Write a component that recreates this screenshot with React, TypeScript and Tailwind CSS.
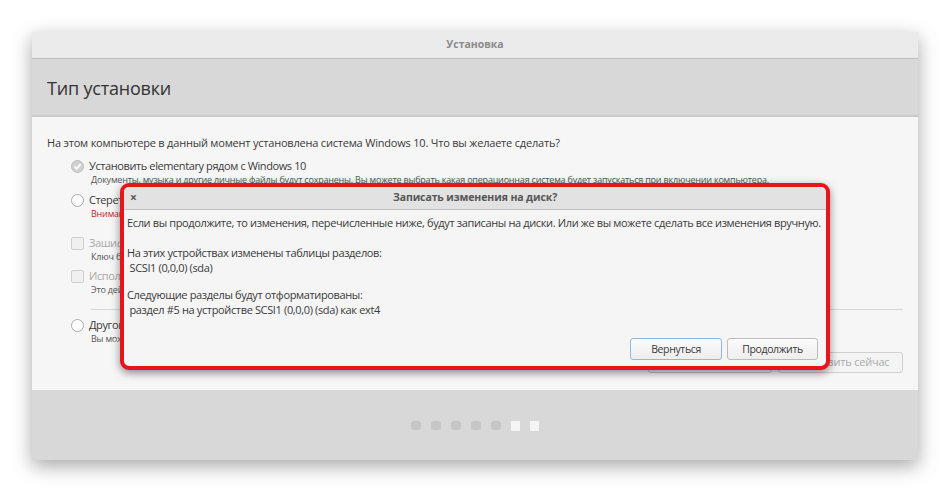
import { JSX } from 'react';

const font = { fontFamily: '"Open Sans", "Noto Sans", sans-serif' };

const CheckedIcon = () => (
    <svg width="13" height="13" viewBox="0 0 13 13" className="shrink-0">
        <circle cx="6.5" cy="6.5" r="6" fill="#d0d0d0" stroke="#bdbdbd" />
        <path d="M3.6 6.7 L5.7 8.8 L9.6 4.4" fill="none" stroke="#ffffff" strokeWidth="1.8" />
    </svg>
);

const RadioIcon = () => (
    <svg width="13" height="13" viewBox="0 0 13 13" className="shrink-0">
        <circle cx="6.5" cy="6.5" r="6" fill="#fdfdfd" stroke="#a9a9a9" />
    </svg>
);

const BoxIcon = () => (
    <span className="block w-[13px] h-[13px] shrink-0 rounded-[2px] border border-[#cfcfcf] bg-[#f0f0f0]" />
);

interface OptionProps {
    icon: JSX.Element;
    label: string;
    desc?: string;
    disabled?: boolean;
    warn?: string;
    className?: string;
}

const Option = ({ icon, label, desc, disabled, warn, className }: OptionProps): JSX.Element => (
    <div className={className}>
        <div className="flex items-center gap-[5px] h-[16px]">
            {icon}
            <span className={`text-[11px] tracking-[-0.4px] whitespace-nowrap ${disabled ? 'text-[#a8a8a8]' : 'text-[#3a3a3a]'}`}>{label}</span>
        </div>
        {desc && <div className="pl-[20px] text-[9px] tracking-[-0.2px] leading-[12px] text-[#555] whitespace-nowrap">{desc}</div>}
        {warn && <div className="pl-[20px] text-[9px] tracking-[-0.2px] leading-[12px] text-[#c6262e] whitespace-nowrap">{warn}</div>}
    </div>
);

const App = (): JSX.Element => {
    return (
        <div className="w-[950px] h-[493px] bg-white pt-[32px] pl-[32px] overflow-hidden" style={font}>
            <div className="relative w-[886px] h-[428px] flex flex-col shadow-[0_6px_18px_rgba(0,0,0,0.35)]">
                {/* title bar */}
                <div className="h-[27px] shrink-0 bg-[#ebebeb] border-b border-[#bdbdbd] flex items-center justify-center">
                    <span className="text-[10.5px] font-bold text-[#8a8a8a]">Установка</span>
                </div>
                {/* page header */}
                <div className="h-[58px] shrink-0 bg-[#d8d8d8] border-b-2 border-[#c9c9c9] flex items-center pl-[15px] pt-[3px]">
                    <span className="text-[18px] tracking-[-0.2px] text-[#333]">Тип установки</span>
                </div>
                {/* body */}
                <div className="flex-1 bg-[#f6f6f6] pl-[15px] pt-[17px] relative">
                    <p className="text-[11px] tracking-[-0.2px] leading-[17px] text-[#3a3a3a] whitespace-nowrap">
                        На этом компьютере в данный момент установлена система Windows 10. Что вы желаете сделать?
                    </p>
                    <div className="pl-[24px] mt-[7px]">
                        <Option
                            icon={<CheckedIcon />}
                            label="Установить elementary рядом с Windows 10"
                            desc="Документы, музыка и другие личные файлы будут сохранены. Вы можете выбрать какая операционная система будет запускаться при включении компьютера."
                        />
                        <Option
                            className="mt-[6px]"
                            icon={<RadioIcon />}
                            label="Стереть диск и установить elementary"
                            warn="Внимание: Это удалит все ваши программы, документы, фотографии, музыку и другие файлы во всех операционных системах."
                        />
                        <Option
                            className="mt-[15px]"
                            icon={<BoxIcon />}
                            disabled
                            label="Зашифровать новую установку elementary для безопасности"
                            desc="Ключ безопасности можно выбрать на следующем шаге."
                        />
                        <Option
                            className="mt-[5px]"
                            icon={<BoxIcon />}
                            disabled
                            label="Использовать LVM при новой установке elementary"
                            desc="Это действие установит систему управления логическими томами (LVM). Это позволит делать снимки и легче изменять разделы."
                        />
                        <div className="ml-[20px] mt-[13px] mr-[15px] border-t border-[#d5d5d5]" />
                        <Option
                            className="mt-[7px]"
                            icon={<RadioIcon />}
                            label="Другой вариант"
                            desc="Вы можете самостоятельно создать или изменить разделы, или выбрать несколько разделов для elementary."
                        />
                    </div>
                    <div className="flex justify-end gap-[6px] pr-[15px] mt-[7px]">
                        <button className="w-[124px] h-[21px] rounded-[3px] border border-[#c4c4c4] bg-[#f4f4f4] text-[11px] text-[#aaa]">Назад</button>
                        <button className="w-[125px] h-[21px] rounded-[3px] border border-[#d0d0d0] bg-[#f4f4f4] text-[11px] tracking-[-0.2px] text-[#aaa]">Установить сейчас</button>
                    </div>
                </div>
                {/* footer */}
                <div className="h-[70px] shrink-0 bg-[#d8d8d8] flex items-center justify-center gap-[10px] pt-[1px]">
                    {[0, 1, 2, 3, 4].map((i) => (
                        <span key={i} className="block w-[10px] h-[9px] rounded-[3px] bg-[#c6c6c6]" />
                    ))}
                    <span className="block w-[9px] h-[10px] bg-[#f4f4f4]" />
                    <span className="block w-[9px] h-[10px] bg-[#f4f4f4]" />
                </div>

                {/* confirmation dialog, outlined in red */}
                <div className="absolute left-[88px] top-[151px] w-[710px] h-[187px] rounded-[9px] border-[4px] border-[#e8141b] bg-[#f5f5f5] shadow-[0_3px_8px_rgba(0,0,0,0.45)] overflow-hidden flex flex-col">
                    <div className="h-[23px] shrink-0 bg-[#e2e2e2] border-b border-[#c2c2c2] relative flex items-center justify-center">
                        <span className="absolute left-[6px] top-[2px] text-[12px] font-bold text-[#555]">×</span>
                        <span className="text-[10.5px] tracking-[-0.1px] font-bold text-[#555]">Записать изменения на диск?</span>
                    </div>
                    <div className="flex-1 pl-[3px] pt-[6px] text-[11px] tracking-[-0.36px] leading-[14px] text-[#3a3a3a] flex flex-col">
                        <p className="whitespace-nowrap">
                            Если вы продолжите, то изменения, перечисленные ниже, будут записаны на диски. Или же вы можете сделать все изменения вручную.
                        </p>
                        <p className="mt-[15px] leading-[15px] whitespace-pre">{'На этих устройствах изменены таблицы разделов:\n SCSI1 (0,0,0) (sda)'}</p>
                        <p className="mt-[12px] leading-[15px] whitespace-pre">{'Следующие разделы будут отформатированы:\n раздел #5 на устройстве SCSI1 (0,0,0) (sda) как ext4'}</p>
                        <div className="mt-auto mb-[6px] flex justify-end gap-[5px] pr-[8px]">
                            <button className="w-[92px] h-[22px] rounded-[3px] border border-[#8fb8dc] bg-gradient-to-b from-[#fbfbfb] to-[#eeeeee] text-[10.5px] text-[#3a3a3a]">Вернуться</button>
                            <button className="w-[91px] h-[22px] rounded-[3px] border border-[#bcbcbc] bg-gradient-to-b from-[#fbfbfb] to-[#eeeeee] text-[10.5px] text-[#3a3a3a]">Продолжить</button>
                        </div>
                    </div>
                </div>
            </div>
        </div>
    );
};

export default App;
